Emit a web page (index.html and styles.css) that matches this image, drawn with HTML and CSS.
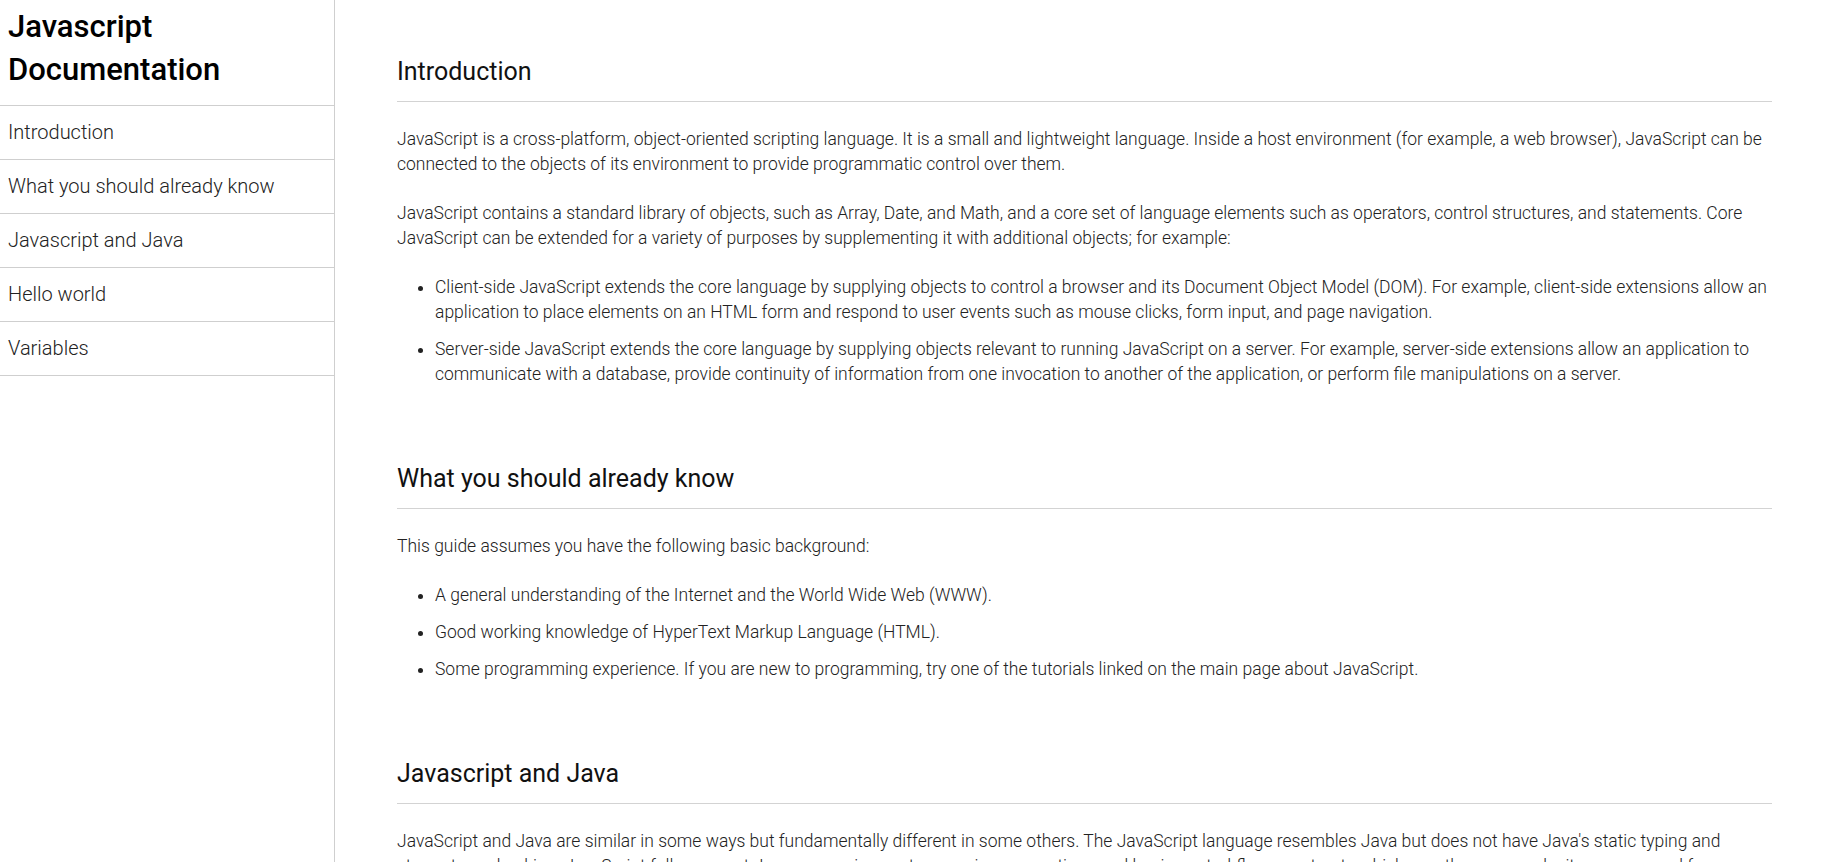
FILE: index.html
```html
<!DOCTYPE html>
<html lang="en">
<head>
<meta charset="utf-8">
<title>Javascript Documentation</title>
<link rel="stylesheet" href="styles.css">
</head>
<body>
<div class="page">
  <nav class="sidebar" id="navbar">
    <header class="sidebar-header"><h1 class="sidebar-title">Javascript Documentation</h1></header>
    <ul class="nav-list">
      <li class="nav-item"><a class="nav-link" href="#Introduction">Introduction</a></li>
      <li class="nav-item"><a class="nav-link" href="#What_you_should_already_know">What you should already know</a></li>
      <li class="nav-item"><a class="nav-link" href="#Javascript_and_Java">Javascript and Java</a></li>
      <li class="nav-item"><a class="nav-link" href="#Hello_world">Hello world</a></li>
      <li class="nav-item"><a class="nav-link" href="#Variables">Variables</a></li>
    </ul>
  </nav>
  <main class="main" id="main-doc">
    <section class="section" id="Introduction">
      <header class="section-header"><h2 class="section-title">Introduction</h2></header>
      <p class="text">JavaScript is a cross-platform, object-oriented scripting language. It is a small and lightweight language. Inside a host environment (for example, a web browser), JavaScript can be connected to the objects of its environment to provide programmatic control over them.</p>
      <p class="text">JavaScript contains a standard library of objects, such as Array, Date, and Math, and a core set of language elements such as operators, control structures, and statements. Core JavaScript can be extended for a variety of purposes by supplementing it with additional objects; for example:</p>
      <ul class="list">
        <li class="list-item">Client-side JavaScript extends the core language by supplying objects to control a browser and its Document Object Model (DOM). For example, client-side extensions allow an application to place elements on an HTML form and respond to user events such as mouse clicks, form input, and page navigation.</li>
        <li class="list-item">Server-side JavaScript extends the core language by supplying objects relevant to running JavaScript on a server. For example, server-side extensions allow an application to communicate with a database, provide continuity of information from one invocation to another of the application, or perform file manipulations on a server.</li>
      </ul>
    </section>
    <section class="section" id="What_you_should_already_know">
      <header class="section-header"><h2 class="section-title">What you should already know</h2></header>
      <p class="text">This guide assumes you have the following basic background:</p>
      <ul class="list">
        <li class="list-item">A general understanding of the Internet and the World Wide Web (WWW).</li>
        <li class="list-item">Good working knowledge of HyperText Markup Language (HTML).</li>
        <li class="list-item">Some programming experience. If you are new to programming, try one of the tutorials linked on the main page about JavaScript.</li>
      </ul>
    </section>
    <section class="section" id="Javascript_and_Java">
      <header class="section-header"><h2 class="section-title">Javascript and Java</h2></header>
      <p class="text">JavaScript and Java are similar in some ways but fundamentally different in some others. The JavaScript language resembles Java but does not have Java's static typing and strong type checking. JavaScript follows most Java expression syntax, naming conventions and basic control-flow constructs which was the reason why it was renamed from LiveScript to JavaScript.</p>
      <p class="text">In contrast to Java's compile-time system of classes built by declarations, JavaScript supports a runtime system based on a small number of data types representing numeric, Boolean, and string values. JavaScript has a prototype-based object model instead of the more common class-based object model.</p>
    </section>
    <section class="section" id="Hello_world">
      <header class="section-header"><h2 class="section-title">Hello world</h2></header>
      <p class="text">To get started with writing JavaScript, open the Scratchpad and write your first "Hello world" JavaScript code.</p>
    </section>
    <section class="section" id="Variables">
      <header class="section-header"><h2 class="section-title">Variables</h2></header>
      <p class="text">You use variables as symbolic names for values in your application. The names of variables, called identifiers, conform to certain rules.</p>
    </section>
  </main>
</div>
</body>
</html>
```

FILE: styles.css
```css
html, body {
  margin: 0;
  padding: 0;
}

body {
  font-family: Roboto, "Liberation Sans", sans-serif;
  color: #222;
  background: #fff;
}

.page {
  display: flex;
  height: 100vh;
  overflow: hidden;
}

.sidebar {
  flex: 0 0 334px;
  width: 334px;
  border-right: 1px solid #cfcfcf;
  box-sizing: content-box;
}

.sidebar-header {
  padding: 5px 8px 14px;
  border-bottom: 1px solid #cfcfcf;
}

.sidebar-title {
  margin: 0;
  font-size: 31px;
  font-weight: 500;
  line-height: 43px;
  color: #000;
}

.nav-list {
  list-style: none;
  margin: 0;
  padding: 0;
}

.nav-item {
  border-bottom: 1px solid #cfcfcf;
}

.nav-link {
  display: block;
  padding: 15px 8px;
  font-size: 20px;
  font-weight: 300;
  line-height: 23px;
  color: #222;
  text-decoration: none;
}

.main {
  flex: 1;
  min-width: 0;
  overflow: hidden;
  padding: 58px 52px 0 62px;
  display: flex;
  flex-direction: column;
  gap: 78px;
}

.section-header {
  border-bottom: 1px solid #d3d3d3;
  padding-bottom: 15px;
  margin-bottom: 25px;
}

.section-title {
  margin: 0;
  font-size: 25px;
  font-weight: 400;
  line-height: 28px;
  color: #111;
}

.text {
  margin: 0 0 24px;
  font-size: 17.5px;
  font-weight: 300;
  line-height: 25px;
}

.list {
  margin: 0 0 24px;
  padding-left: 38px;
  font-size: 17.5px;
  font-weight: 300;
  line-height: 25px;
}

.list-item + .list-item {
  margin-top: 12px;
}

.section > :last-child {
  margin-bottom: 0;
}
```
